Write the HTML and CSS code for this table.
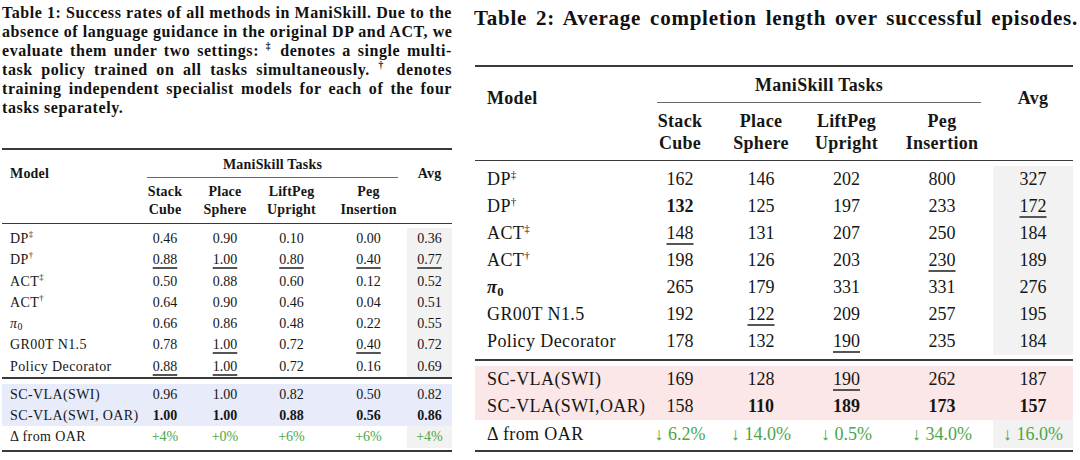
FILE: index.html
```html
<!DOCTYPE html>
<html>
<head>
<meta charset="utf-8">
<link rel="stylesheet" href="styles.css">
</head>
<body>
<div class="page">
  <section class="panel left">
    <p class="caption cap1">
      <span class="ln">Table 1: Success rates of all methods in ManiSkill. Due to the</span>
      <span class="ln">absence of language guidance in the original DP and ACT, we</span>
      <span class="ln">evaluate them under two settings: <sup>‡</sup> denotes a single multi-</span>
      <span class="ln">task policy trained on all tasks simultaneously. <sup>†</sup> denotes</span>
      <span class="ln">training independent specialist models for each of the four</span>
      <span class="ln last">tasks separately.</span>
    </p>
    <table class="tbl t1">
      <colgroup>
        <col class="c-model"><col class="c-a"><col class="c-b"><col class="c-c"><col class="c-d"><col class="c-avg">
      </colgroup>
      <thead>
        <tr class="h1">
          <th class="model" rowspan="2">Model</th>
          <th class="grp" colspan="4"><span class="grp-label">ManiSkill Tasks</span></th>
          <th class="avgh" rowspan="2">Avg</th>
        </tr>
        <tr class="h2">
          <th>Stack<br>Cube</th><th>Place<br>Sphere</th><th>LiftPeg<br>Upright</th><th>Peg<br>Insertion</th>
        </tr>
      </thead>
      <tbody class="base">
        <tr class="sp"><td colspan="6"></td></tr>
        <tr><td class="name">DP<sup>‡</sup></td><td>0.46</td><td>0.90</td><td>0.10</td><td>0.00</td><td class="avg">0.36</td></tr>
        <tr><td class="name">DP<sup>†</sup></td><td><u>0.88</u></td><td><u>1.00</u></td><td><u>0.80</u></td><td><u>0.40</u></td><td class="avg"><u>0.77</u></td></tr>
        <tr><td class="name">ACT<sup>‡</sup></td><td>0.50</td><td>0.88</td><td>0.60</td><td>0.12</td><td class="avg">0.52</td></tr>
        <tr><td class="name">ACT<sup>†</sup></td><td>0.64</td><td>0.90</td><td>0.46</td><td>0.04</td><td class="avg">0.51</td></tr>
        <tr><td class="name"><i class="pi">π</i><sub>0</sub></td><td>0.66</td><td>0.86</td><td>0.48</td><td>0.22</td><td class="avg">0.55</td></tr>
        <tr><td class="name">GR00T N1.5</td><td>0.78</td><td><u>1.00</u></td><td>0.72</td><td><u>0.40</u></td><td class="avg">0.72</td></tr>
        <tr><td class="name">Policy Decorator</td><td><u>0.88</u></td><td><u>1.00</u></td><td>0.72</td><td>0.16</td><td class="avg">0.69</td></tr>
      </tbody>
      <tbody class="ours">
        <tr class="sp"><td colspan="6"></td></tr>
        <tr class="hl"><td class="name">SC-VLA(SWI)</td><td>0.96</td><td>1.00</td><td>0.82</td><td>0.50</td><td>0.82</td></tr>
        <tr class="hl"><td class="name">SC-VLA(SWI, OAR)</td><td><b>1.00</b></td><td><b>1.00</b></td><td><b>0.88</b></td><td><b>0.56</b></td><td><b>0.86</b></td></tr>
        <tr class="delta"><td class="name">Δ from OAR</td><td class="up">+4%</td><td class="up">+0%</td><td class="up">+6%</td><td class="up">+6%</td><td class="avg up">+4%</td></tr>
        <tr class="sp end"><td colspan="6"></td></tr>
      </tbody>
    </table>
  </section>

  <section class="panel right">
    <p class="caption cap2"><span class="ln">Table 2: Average completion length over successful episodes.</span></p>
    <table class="tbl t2">
      <colgroup>
        <col class="c-model"><col class="c-a"><col class="c-b"><col class="c-c"><col class="c-d"><col class="c-avg">
      </colgroup>
      <thead>
        <tr class="h1">
          <th class="model" rowspan="2">Model</th>
          <th class="grp" colspan="4"><span class="grp-label">ManiSkill Tasks</span></th>
          <th class="avgh" rowspan="2">Avg</th>
        </tr>
        <tr class="h2">
          <th>Stack<br>Cube</th><th>Place<br>Sphere</th><th>LiftPeg<br>Upright</th><th>Peg<br>Insertion</th>
        </tr>
      </thead>
      <tbody class="base">
        <tr class="sp"><td colspan="6"></td></tr>
        <tr><td class="name">DP<sup>‡</sup></td><td>162</td><td>146</td><td>202</td><td>800</td><td class="avg">327</td></tr>
        <tr><td class="name">DP<sup>†</sup></td><td><b>132</b></td><td>125</td><td>197</td><td>233</td><td class="avg"><u>172</u></td></tr>
        <tr><td class="name">ACT<sup>‡</sup></td><td><u>148</u></td><td>131</td><td>207</td><td>250</td><td class="avg">184</td></tr>
        <tr><td class="name">ACT<sup>†</sup></td><td>198</td><td>126</td><td>203</td><td><u>230</u></td><td class="avg">189</td></tr>
        <tr><td class="name"><b><i class="pi">π</i><sub>0</sub></b></td><td>265</td><td>179</td><td>331</td><td>331</td><td class="avg">276</td></tr>
        <tr><td class="name">GR00T N1.5</td><td>192</td><td><u>122</u></td><td>209</td><td>257</td><td class="avg">195</td></tr>
        <tr><td class="name">Policy Decorator</td><td>178</td><td>132</td><td><u>190</u></td><td>235</td><td class="avg">184</td></tr>
        <tr class="sp tail"><td colspan="6"></td></tr>
      </tbody>
      <tbody class="ours">
        <tr class="sp"><td colspan="6"></td></tr>
        <tr class="hl"><td class="name">SC-VLA(SWI)</td><td>169</td><td>128</td><td><u>190</u></td><td>262</td><td>187</td></tr>
        <tr class="hl"><td class="name">SC-VLA(SWI,OAR)</td><td>158</td><td><b>110</b></td><td><b>189</b></td><td><b>173</b></td><td><b>157</b></td></tr>
        <tr class="delta"><td class="name">Δ from OAR</td><td class="down">↓ 6.2%</td><td class="down">↓ 14.0%</td><td class="down">↓ 0.5%</td><td class="down">↓ 34.0%</td><td class="avg down">↓ 16.0%</td></tr>
        <tr class="sp end"><td colspan="6"></td></tr>
      </tbody>
    </table>
  </section>
</div>
</body>
</html>
```

FILE: styles.css
```css
html, body {
  margin: 0;
  padding: 0;
  background: #ffffff;
}

body {
  font-family: "Liberation Serif", "DejaVu Serif", serif;
  color: #161616;
  width: 1080px;
  height: 460px;
  overflow: hidden;
}

.page {
  display: flex;
  align-items: flex-start;
}

.panel.left {
  width: 450px;
  margin-left: 2px;
}

.panel.right {
  width: 604px;
  margin-left: 22px;
}

.caption {
  margin: 0;
  font-weight: bold;
  color: #111;
}

.caption .ln {
  display: block;
  text-align: justify;
  text-align-last: justify;
  white-space: nowrap;
}

.caption .ln.last {
  text-align-last: left;
}

.caption sup {
  font-size: 0.6em;
  vertical-align: 0.7em;
  line-height: 0;
}

.cap1 {
  font-size: 16px;
  letter-spacing: 0.55px;
  line-height: 19px;
  padding-top: 3px;
}

.cap2 {
  font-size: 21px;
  letter-spacing: 0.75px;
  line-height: 24px;
  padding-top: 6px;
}

/* ---------- tables ---------- */
.tbl {
  border-collapse: collapse;
  table-layout: fixed;
  border-top: 2px solid #3a3a3a;
  border-bottom: 2px solid #3a3a3a;
}

.tbl th,
.tbl td {
  padding: 0;
  text-align: center;
  white-space: nowrap;
}

.tbl th {
  font-weight: bold;
}

.tbl thead {
  border-bottom: 1px solid #3a3a3a;
}

.tbl .model,
.tbl .avgh {
  vertical-align: top;
}

.tbl .model,
.tbl .name {
  text-align: left;
}

.tbl .grp {
  vertical-align: top;
}

.tbl .grp-label {
  display: block;
  border-bottom: 1px solid #6a6a6a;
}

.tbl tbody.ours {
  border-top: 2px solid #3a3a3a;
}

.tbl .sp td {
  padding: 0;
  line-height: 0;
  font-size: 0;
}

.tbl .avg {
  background: #f2f2f2;
}

.tbl u {
  text-decoration: underline;
  text-decoration-thickness: 1.5px;
  text-decoration-color: #555;
}

.tbl sup {
  font-size: 0.62em;
  vertical-align: 0.65em;
  line-height: 0;
}

.tbl sub {
  font-size: 0.7em;
  vertical-align: -0.25em;
  line-height: 0;
}

.tbl .pi {
  font-style: italic;
}

.up,
.down {
  color: #4ba64a;
}

/* ---------- table 1 (left) ---------- */
.t1 {
  width: 450px;
  font-size: 14px;
  margin-top: 31px;
}

.t1 .c-model { width: 131px; }
.t1 .c-a { width: 64px; }
.t1 .c-b { width: 56px; }
.t1 .c-c { width: 77px; }
.t1 .c-d { width: 77px; }
.t1 .c-avg { width: 45px; }

.t1 th {
  letter-spacing: 0.2px;
}

.t1 .model {
  padding-left: 8px;
  padding-top: 15px;
  line-height: 18px;
}

.t1 .avgh {
  padding-top: 15px;
  line-height: 18px;
}

.t1 .grp-label {
  margin: 0 9px 0 14px;
  padding-top: 2px;
  line-height: 25px;
}

.t1 .h2 th {
  line-height: 18px;
  padding-top: 5px;
  padding-bottom: 4px;
}

.t1 td {
  line-height: 21.3px;
}

.t1 td.name {
  padding-left: 8px;
  letter-spacing: 0.4px;
}

.t1 .sp td { height: 4px; }
.t1 .ours .sp td { height: 5px; }
.t1 .ours .sp.end td { height: 2px; }

.t1 .hl td {
  background: #e7ebfa;
  line-height: 21px;
}

.t1 .delta td {
  line-height: 22px;
}

.t1 u {
  text-underline-offset: 3px;
}

/* ---------- table 2 (right) ---------- */
.t2 {
  width: 598px;
  margin-left: 1px;
  margin-top: 35px;
  font-size: 18px;
}

.t2 .c-model { width: 165px; }
.t2 .c-a { width: 80px; }
.t2 .c-b { width: 82px; }
.t2 .c-c { width: 89px; }
.t2 .c-d { width: 102px; }
.t2 .c-avg { width: 80px; }

.t2 th {
  letter-spacing: 0.3px;
}

.t2 .model {
  padding-left: 12px;
  padding-top: 20px;
  line-height: 22px;
}

.t2 .avgh {
  padding-top: 20px;
  line-height: 22px;
}

.t2 .grp-label {
  margin: 0 12px 0 17px;
  padding-top: 2px;
  line-height: 33px;
}

.t2 .h2 th {
  line-height: 22px;
  padding-top: 7px;
  padding-bottom: 6px;
}

.t2 td {
  line-height: 27px;
}

.t2 td.name {
  padding-left: 12px;
  letter-spacing: 0.4px;
}

.t2 .sp td { height: 5px; }
.t2 .sp.tail td { height: 4px; }
.t2 .ours .sp.end td { height: 2px; }

.t2 .hl td {
  background: #fbe7e7;
}

.t2 .delta td {
  line-height: 28px;
}

.t2 u {
  text-underline-offset: 4px;
}
```
